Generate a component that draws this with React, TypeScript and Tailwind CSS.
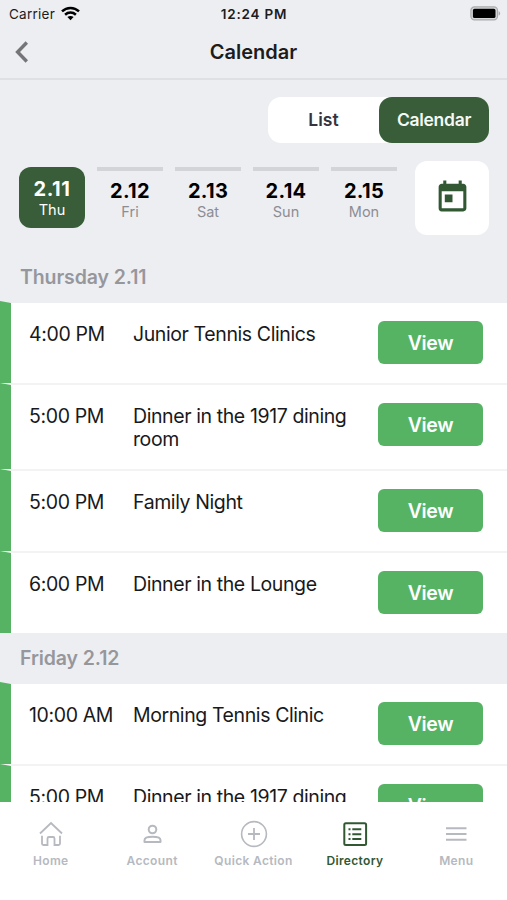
import type { ReactNode } from 'react'
import clsx from 'clsx'
import { MdToday } from 'react-icons/md'

interface CalendarEvent {
  time: string
  title: string
}

interface EventGroup {
  label: string
  events: CalendarEvent[]
}

const days = [
  { date: '2.11', weekday: 'Thu' },
  { date: '2.12', weekday: 'Fri' },
  { date: '2.13', weekday: 'Sat' },
  { date: '2.14', weekday: 'Sun' },
  { date: '2.15', weekday: 'Mon' },
]

const groups: EventGroup[] = [
  {
    label: 'Thursday 2.11',
    events: [
      { time: '4:00 PM', title: 'Junior Tennis Clinics' },
      { time: '5:00 PM', title: 'Dinner in the 1917 dining room' },
      { time: '5:00 PM', title: 'Family Night' },
      { time: '6:00 PM', title: 'Dinner in the Lounge' },
    ],
  },
  {
    label: 'Friday 2.12',
    events: [
      { time: '10:00 AM', title: 'Morning Tennis Clinic' },
      { time: '5:00 PM', title: 'Dinner in the 1917 dining room' },
    ],
  },
]

function StatusBar() {
  return (
    <div className="grid h-7 shrink-0 grid-cols-3 items-center pl-[9px] pr-[6px] text-[13.5px] text-[#1c1c1e]">
      <div className="flex items-center gap-[6px]">
        <span className="tracking-[0.25px]">Carrier</span>
        <svg className="-mt-[2px] h-[15px] w-[19px]" viewBox="0 0 19 15" fill="none" stroke="#000" strokeWidth="2.5">
          <path d="M1 5.4C5.8 0.8 13.2 0.8 18 5.4" />
          <path d="M4.1 8.7C7.2 5.9 11.8 5.9 14.9 8.7" />
          <path d="M9.5 14.2L6.4 11.1C8.1 9.6 10.9 9.6 12.6 11.1Z" fill="#000" stroke="none" />
        </svg>
      </div>
      <div className="-ml-[2px] text-center font-semibold tracking-[0.8px]">12:24 PM</div>
      <svg className="-mt-[2px] h-[15px] w-[31px] justify-self-end" viewBox="0 0 31 15">
        <rect x="0.9" y="0.9" width="26.6" height="13" rx="3.6" fill="#d6d7d9" stroke="#a9aaac" strokeWidth="1.2" />
        <rect x="2.9" y="2.8" width="22.6" height="9.2" rx="1.6" fill="#000" />
        <path d="M28.6 5.2C30.6 5.9 30.6 8.9 28.6 9.6Z" fill="#a9aaac" />
      </svg>
    </div>
  )
}

function Header() {
  return (
    <div className="grid h-[52px] shrink-0 grid-cols-3 items-center border-b-2 border-[#dfe0e3] px-[15px] pb-[2px]">
      <svg className="h-[22px] w-[14px]" viewBox="0 0 14 22" fill="none" stroke="#757577" strokeWidth="3.4">
        <path d="M11.8 1.5L2.6 11L11.8 20.5" />
      </svg>
      <h1 className="text-center text-[20px] font-semibold text-[#1c1c1e]">Calendar</h1>
    </div>
  )
}

function DayPicker() {
  return (
    <div className="flex items-start pl-[19px] pr-[18px]">
      <div className="flex flex-1 gap-[12px] pt-[6px]">
        {days.map((day, i) => (
          <div
            key={day.date}
            className={clsx(
              'flex w-[66px] flex-col items-center',
              i === 0 ? 'h-[61px] rounded-[12px] bg-[#385d38] pt-[10px] text-white' : 'border-t-4 border-[#d3d4d7] pt-[8px]'
            )}
          >
            <span className={clsx('text-[20px] leading-6 font-bold', i > 0 ? 'tracking-[0.3px] text-black' : 'tracking-[0.6px]')}>
              {day.date}
            </span>
            <span className={clsx('text-[14.5px] leading-[18px]', i > 0 && 'text-[#8c8d92]')}>{day.weekday}</span>
          </div>
        ))}
      </div>
      <button type="button" className="flex h-[74px] w-[74px] items-center justify-center rounded-[12px] bg-white pb-[2px]">
        <MdToday className="h-[37px] w-[37px] text-[#315833]" />
      </button>
    </div>
  )
}

function EventRow({ event, first }: { event: CalendarEvent; first: boolean }) {
  return (
    <div
      className={clsx(
        'flex items-start border-t-2 border-l-[11px] border-l-[#56b364] bg-white pr-[24px] pl-[18px]',
        first ? 'border-t-[#edeef2]' : 'border-t-[#f3f3f4]'
      )}
    >
      <span className="w-[104px] shrink-0 pt-[20px] text-[19.5px] leading-[23px] tracking-[-0.38px] text-[#19191b]">
        {event.time}
      </span>
      <span className="flex-1 pt-[20px] pb-[18px] text-[19.5px] leading-[23px] tracking-[-0.4px] text-[#19191b]">
        {event.title}
      </span>
      <button
        type="button"
        className="mt-[18px] mb-[19px] ml-[16px] h-[43px] w-[105px] shrink-0 rounded-[6px] bg-[#56b364] pt-[2px] text-[19.5px] font-semibold tracking-[-0.3px] text-white"
      >
        View
      </button>
    </div>
  )
}

function Tab({ label, active, children }: { label: string; active?: boolean; children: ReactNode }) {
  return (
    <div className={clsx('flex flex-1 flex-col items-center', active ? 'text-[#315833]' : 'text-[#b6b9bf]')}>
      <svg className="h-8 w-8" viewBox="0 0 32 32" fill="none" stroke="currentColor" strokeWidth="2">
        {children}
      </svg>
      <span className="mt-[3px] text-[12px] leading-4 font-semibold tracking-[0.35px] whitespace-nowrap">{label}</span>
    </div>
  )
}

function TabBar() {
  return (
    <nav className="flex h-[98px] shrink-0 bg-white pt-4">
      <Tab label="Home">
        <path d="M5 15.5L16 5L27 15.5" strokeWidth="1.8" />
        <path
          d="M7 17.8V25.5Q7 27 8.5 27H12.5V20.5Q12.5 19 14 19H18Q19.5 19 19.5 20.5V27H23.5Q25 27 25 25.5V17.8"
          strokeWidth="1.8"
        />
      </Tab>
      <Tab label="Account">
        <circle cx="16.5" cy="11.5" r="3.8" />
        <path d="M8.5 24V22.2C8.5 20 12.5 18.8 16.5 18.8S24.5 20 24.5 22.2V24Z" strokeLinejoin="round" />
      </Tab>
      <Tab label="Quick Action">
        <circle cx="16" cy="16" r="12.4" strokeWidth="1.6" />
        <path d="M16 10V22M10 16H22" strokeWidth="1.8" />
      </Tab>
      <Tab label="Directory" active>
        <rect x="5.3" y="5.2" width="21.8" height="21.8" rx="1.5" />
        <path d="M13.3 11.3H22.3M13.3 16.2H22.3M13.3 21.1H22.3M9.5 11.3H11.5M9.5 16.2H11.5M9.5 21.1H11.5" />
      </Tab>
      <Tab label="Menu">
        <path d="M6 10.3H26.5M6 16H26.5M6 21.7H26.5" />
      </Tab>
    </nav>
  )
}

export default function App() {
  return (
    <div className="flex h-[900px] w-full flex-col overflow-hidden bg-[#edeef2] font-['Inter',sans-serif]">
      <StatusBar />
      <Header />

      <div className="mt-[17px] mr-[18px] mb-[18px] flex h-[46px] w-[221px] shrink-0 self-end rounded-[13px] bg-white text-[17.5px] font-semibold">
        <button type="button" className="w-[111px] text-[#33343f]">
          List
        </button>
        <button type="button" className="w-[110px] rounded-[13px] bg-[#385d38] tracking-[-0.3px] text-[#f6f8f4]">
          Calendar
        </button>
      </div>

      <DayPicker />

      <div className="-mt-px min-h-0 flex-1 overflow-hidden pt-[18px]">
        {groups.map((group) => (
          <section key={group.label}>
            <h2 className="flex h-[49px] items-center pt-[2px] pl-5 text-[19.5px] font-semibold tracking-[-0.1px] text-[#96979d]">
              {group.label}
            </h2>
            {group.events.map((event, i) => (
              <EventRow key={i} event={event} first={i === 0} />
            ))}
          </section>
        ))}
      </div>

      <TabBar />
    </div>
  )
}
